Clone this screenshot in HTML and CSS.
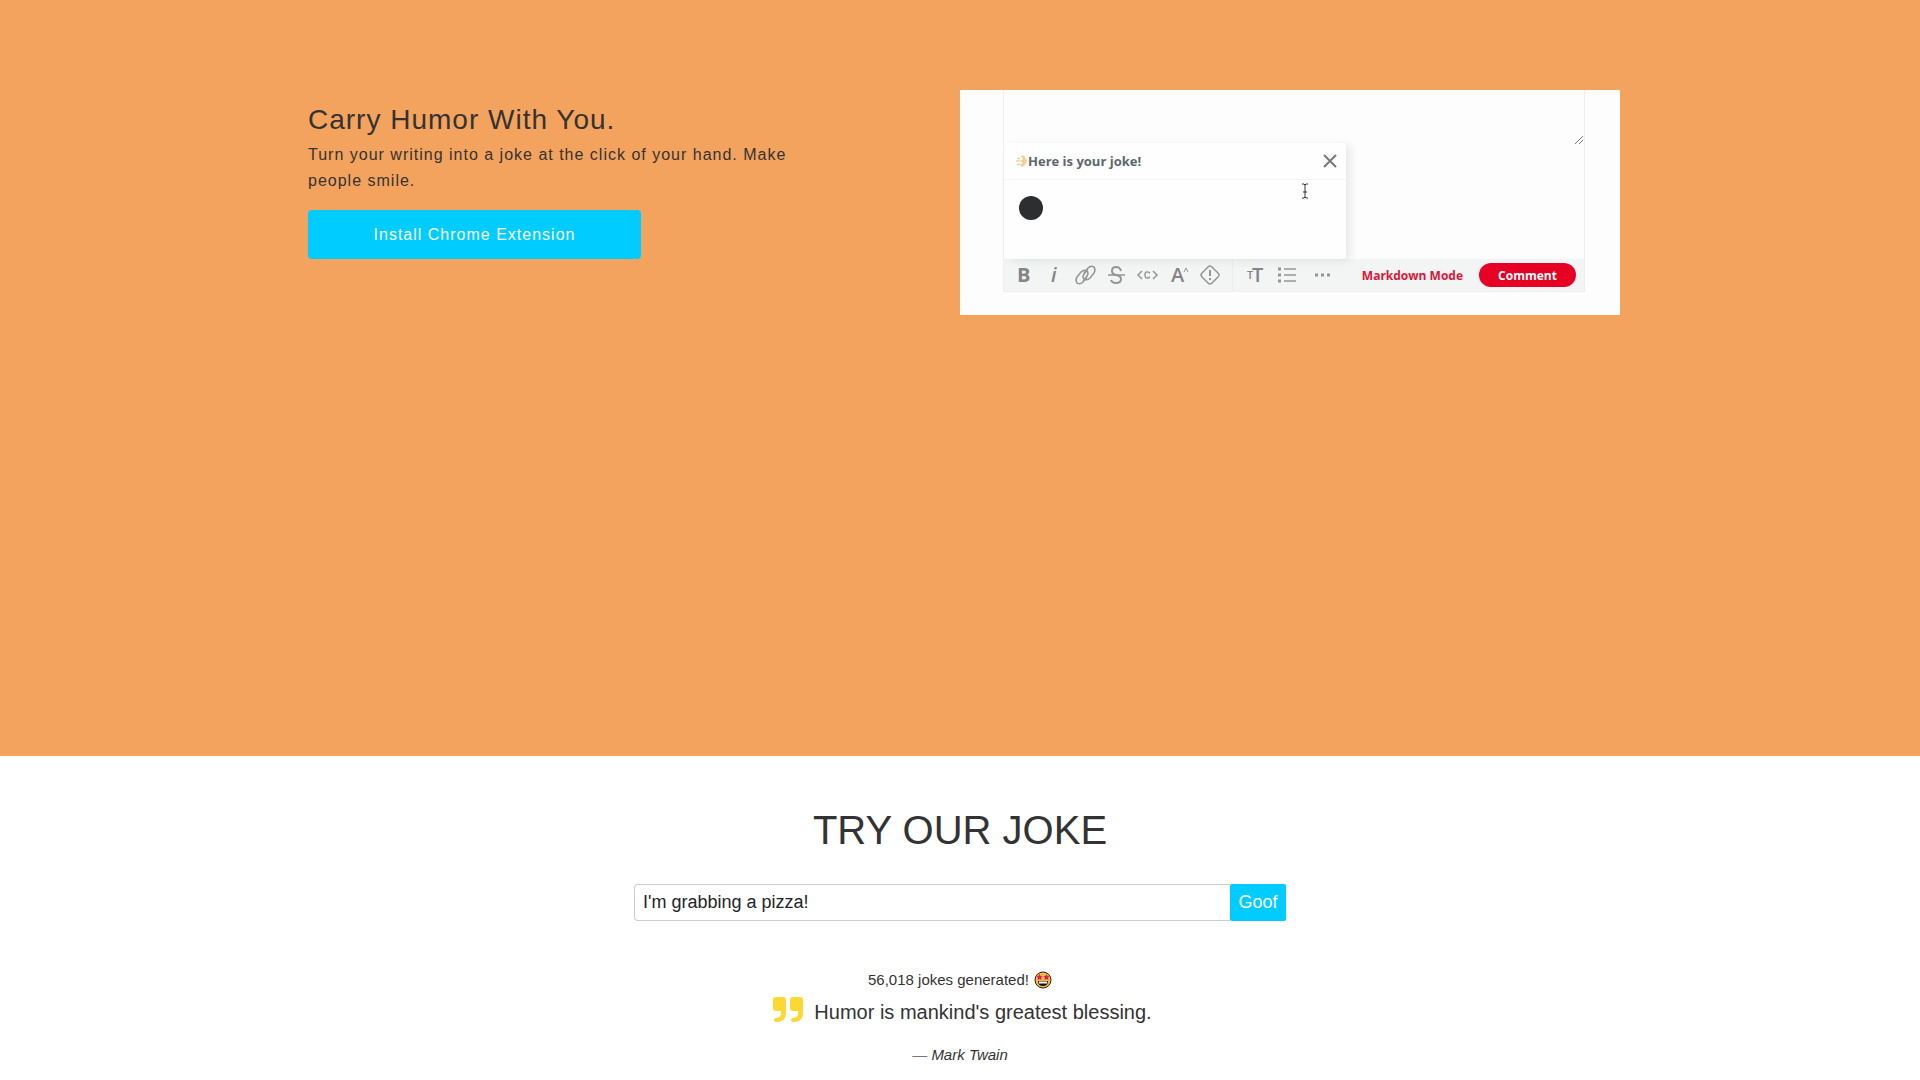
FILE: index.html
```html
<!DOCTYPE html>
<html lang="en">
<head>
	<meta charset="UTF-8">
	<meta name="viewport" content="width=device-width, initial-scale=1.0">
	<title>Carry Humor With You</title>
	<link rel="stylesheet" href="styles.css">
</head>
<body>

	<section class="hero">
		<div class="hero_inner">
			<div class="hero_text">
				<h1>Carry Humor With You.</h1>
				<p>Turn your writing into a joke at the click of your hand. Make people smile.</p>
				<a class="install_btn" href="#">Install Chrome Extension</a>
			</div>

			<div class="preview">
				<div class="editor">
					<div class="editor_area">
						<svg class="resize" width="8" height="8" viewBox="0 0 8 8"><path d="M0 8L8 0M4 8L8 4"/></svg>
						<div class="popup">
							<div class="popup_head">
								<svg width="12" height="14" viewBox="0 0 12 14">
									<path d="M6 1l3 2 2 4-2 4-3 2-2-2 3-2-3-2 3-2-2-2z" fill="#f5cf8e"/>
									<path d="M1 4l3 1M0 7h4M1 11l3-1" stroke="#d9bfa0" fill="none"/>
								</svg>
								<span>Here is your joke!</span>
								<button class="close_btn" aria-label="Close">
									<svg width="14" height="14" viewBox="0 0 14 14"><path d="M1 1l12 12M13 1L1 13"/></svg>
								</button>
							</div>
							<div class="popup_body">
								<span class="dot"></span>
								<svg class="cursor" width="8" height="16" viewBox="0 0 8 16"><path d="M1 1h2l1 1 1-1h2M1 15h2l1-1 1 1h2M4 2v12M2 9h4"/></svg>
							</div>
						</div>
					</div>
					<div class="toolbar">
						<button class="tool" aria-label="Bold"><svg viewBox="0 0 31 24"><text x="9" y="19" font-size="20" font-weight="700">B</text></svg></button>
						<button class="tool" aria-label="Italic"><svg viewBox="0 0 31 24"><text x="12" y="19" font-size="20" font-style="italic" font-weight="600">i</text></svg></button>
						<button class="tool" aria-label="Link"><svg viewBox="0 0 31 24"><path d="M14 10l4-5q3-3 6-1 2 3 0 6l-4 5q-3 3-6 1-2-2 0-5l4-5M17 14l-4 5q-3 3-6 1-2-3 0-6l4-5q3-3 6-1 2 2 0 5l-4 5"/></svg></button>
						<button class="tool" aria-label="Strikethrough"><svg viewBox="0 0 31 24"><path d="M20 8q-1-4-5-4-4 0-4 4 0 3 4 4M15 12q5 1 5 4 0 4-5 4-4 0-5-3" stroke-width="2"/><path d="M7 12h17"/></svg></button>
						<button class="tool" aria-label="Code"><svg viewBox="0 0 31 24"><path d="M10 8l-4 4 4 4M21 8l4 4-4 4M18 10q-5-3-5 2t5 2"/></svg></button>
						<button class="tool" aria-label="Superscript"><svg viewBox="0 0 31 24"><text x="8" y="19" font-size="20" font-weight="600">A</text><path d="M21 9l2-4 2 4" stroke-width="1"/></svg></button>
						<button class="tool" aria-label="Spoiler"><svg viewBox="0 0 31 24"><path d="M14 4q2-2 4 0l6 6q2 2 0 4l-6 6q-2 2-4 0l-6-6q-2-2 0-4z"/><path d="M16 7v6M16 15v2" stroke-width="2"/></svg></button>
						<span class="divider"></span>
						<button class="tool" aria-label="Heading"><svg viewBox="0 0 31 24"><text x="7" y="16" font-size="11" font-weight="600">T</text><text x="12" y="19" font-size="20" font-weight="600">T</text></svg></button>
						<button class="tool" aria-label="List"><svg viewBox="0 0 31 24"><path d="M13 6h12M13 12h12M13 18h12"/><path d="M7 6h3M7 12h3M7 18h3" stroke-width="3"/></svg></button>
						<button class="tool more" aria-label="More"><svg viewBox="0 0 31 24"><path d="M8 12h3M14 12h3M20 12h3" stroke-width="3"/></svg></button>
						<button class="mode_btn">Markdown Mode</button>
						<button class="comment_btn">Comment</button>
					</div>
				</div>
			</div>
		</div>
	</section>

	<section class="try">
		<h2>TRY OUR JOKE</h2>
		<form class="joke_form">
			<input class="joke_input" type="text" aria-label="Your sentence" value="I'm grabbing a pizza!">
			<button class="goof_btn" type="button">Goof</button>
		</form>
		<p class="counter">
			56,018 jokes generated!
			<svg width="18" height="18" viewBox="0 0 18 18">
				<circle cx="9" cy="9" r="8" fill="#fbb93c" stroke="#222" stroke-width="1"/>
				<path d="M5.500 3l1 2 2 .3-1.500 1.500.4 2.200-1.900-1-1.900 1 .4-2.200L2.500 5.300l2-.3zM12.500 3l1 2 2 .3-1.500 1.500.4 2.200-1.900-1-1.900 1 .4-2.200-1.500-1.500 2-.3z" fill="#d81b60"/>
				<path d="M4 10h10q0 5-5 5t-5-5z" fill="#111"/>
				<path d="M5 10.500h8v2H5z" fill="#fff"/>
			</svg>
		</p>
		<blockquote class="quote">
			<svg width="30" height="25" viewBox="0 0 30 25" fill="#fdd835">
				<path d="M3 0h7q3 0 3 3v13q0 9-10 9-2 0-2-2 0-2 2-2 5 0 5-5v-2H3q-3 0-3-3V3q0-3 3-3z"/>
				<path d="M20 0h7q3 0 3 3v13q0 9-10 9-2 0-2-2 0-2 2-2 5 0 5-5v-2h-5q-3 0-3-3V3q0-3 3-3z"/>
			</svg>
			<span>Humor is mankind's greatest blessing.</span>
		</blockquote>
		<p class="author"><span>—</span> <cite>Mark Twain</cite></p>
	</section>

</body>
</html>
```
FILE: styles.css
```css
* {
	box-sizing: border-box;
}
body {
	margin: 0;
	font-family: "Liberation Sans", Arial, sans-serif;
	color: #333;
	background: #fff;
}
h1, h2, p, blockquote {
	margin: 0;
	font-weight: 400;
}
button {
	border: 0;
	padding: 0;
	background: none;
	font-family: inherit;
	cursor: pointer;
}

/* hero */
.hero {
	min-height: 70vh;
	padding-top: 90px;
	background: #f4a35e;
}
.hero_inner {
	display: grid;
	grid-template-columns: 1fr 1fr;
	align-items: start;
	width: 70%;
	margin: 0 auto;
}
.hero_text {
	padding: 12px 20px 0;
	letter-spacing: 1px;
}
.hero_text h1 {
	font-size: 28px;
	line-height: 36px;
}
.hero_text p {
	max-width: 500px;
	margin: 4px 0 16px;
	font-size: 16px;
	line-height: 26px;
}
.install_btn {
	display: block;
	max-width: 333px;
	border-radius: 4px;
	background: #00ccff;
	color: #fff;
	font-size: 16px;
	line-height: 49px;
	text-align: center;
	text-decoration: none;
}

/* editor preview */
.preview {
	margin-right: 12px;
	padding: 0 35px 23px 43px;
	background: #fdfdfd;
	font-family: "Open Sans", sans-serif;
}
.editor {
	border: 1px solid #eeefef;
	border-top: 0;
}
.editor_area {
	position: relative;
	height: 169px;
}
.resize {
	position: absolute;
	top: 46px;
	right: 1px;
	stroke: #777;
}
.popup {
	position: absolute;
	left: 0;
	bottom: 0;
	width: 342px;
	border-radius: 4px;
	background: #fefefe;
	box-shadow: 5px 2px 8px rgba(0, 0, 0, 0.08);
}
.popup_head {
	display: flex;
	align-items: center;
	height: 37px;
	padding: 0 9px 0 12px;
	border-bottom: 1px solid #f5f3f3;
	color: #5a686c;
	font-size: 13px;
	font-weight: 700;
}
.close_btn {
	display: flex;
	margin-left: auto;
}
.close_btn svg, .cursor {
	fill: none;
	stroke: #777;
	stroke-width: 2;
}
.cursor {
	margin-top: 2px;
	stroke-width: 1;
	stroke: #333;
}
.popup_body {
	display: flex;
	justify-content: space-between;
	height: 79px;
	padding: 1px 37px 0 15px;
}
.dot {
	width: 24px;
	height: 24px;
	margin-top: 15px;
	border-radius: 50%;
	background: #2d2e30;
}
.toolbar {
	display: flex;
	align-items: center;
	height: 32px;
	padding: 0 8px 0 4px;
	background: #f3f4f4;
}
.tool {
	display: flex;
	width: 31px;
	height: 24px;
}
.tool svg {
	width: 31px;
	height: 24px;
	overflow: visible;
	fill: none;
	stroke: #959595;
	stroke-width: 1.5;
}
.tool text {
	fill: #858585;
	stroke: none;
}
.divider {
	width: 1px;
	height: 32px;
	margin: 0 7px;
	background: #ebecec;
}
.more {
	margin-left: 5px;
}
.mode_btn {
	margin-left: auto;
	color: #d9173a;
	font-size: 12px;
	font-weight: 700;
}
.comment_btn {
	width: 97px;
	height: 24px;
	margin-left: 16px;
	border-radius: 12px;
	background: #e60023;
	color: #fff;
	font-size: 12px;
	font-weight: 700;
}

/* try it */
.try {
	padding: 48px 20px 12px;
	text-align: center;
}
.try h2 {
	font-size: 40px;
	line-height: 52px;
}
.joke_form {
	display: flex;
	max-width: 652px;
	margin: 28px auto 48px;
}
.joke_input {
	flex: 1;
	min-width: 0;
	height: 37px;
	padding: 0 8px;
	border: 1px solid #ccc;
	border-right: 0;
	border-radius: 4px 0 0 4px;
	color: #212529;
	font-family: inherit;
	font-size: 18px;
}
.goof_btn {
	width: 56px;
	border-radius: 2px;
	background: #00ccff;
	color: #fff;
	font-size: 18px;
}
.counter {
	display: flex;
	justify-content: center;
	align-items: center;
	gap: 5px;
	font-size: 15px;
	line-height: 22px;
}
.quote {
	display: flex;
	justify-content: center;
	gap: 11px;
	padding: 6px 0 0 5px;
	font-size: 20px;
	line-height: 30px;
}
.author {
	padding-top: 17px;
	font-size: 15px;
	line-height: 22px;
}
.author span {
	color: #777;
}
```
